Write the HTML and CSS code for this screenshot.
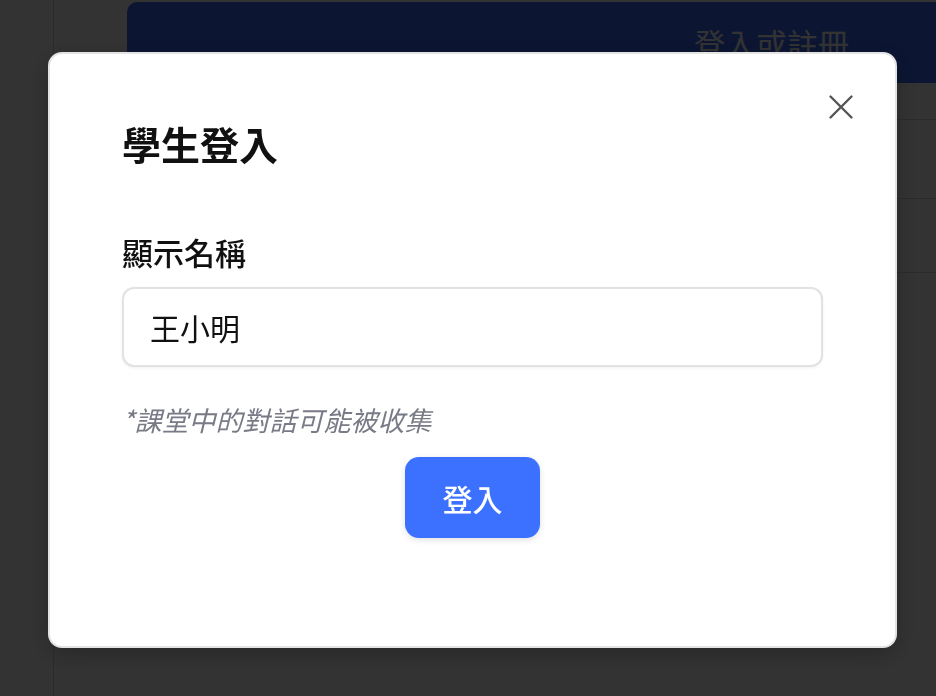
FILE: index.html
```html
<!DOCTYPE html>
<html lang="zh-Hant">
<head>
  <meta charset="UTF-8">
  <meta name="viewport" content="width=device-width, initial-scale=1.0">
  <title>學生登入</title>
  <link rel="stylesheet" href="styles.css">
</head>
<body>

<div class="page">
  <aside class="sidebar"></aside>
  <main class="main">
    <header class="topbar">登入或註冊</header>
    <div class="row row-sm"></div>
    <div class="row row-lg"></div>
    <div class="row row-md"></div>
  </main>
</div>

<!-- Login dialog -->
<div class="overlay">
  <div class="modal">
    <button class="close-btn" aria-label="關閉">
      <svg width="40" height="40" viewBox="0 0 40 40">
        <path d="M9.5 9.5 L30.5 30.5 M30.5 9.5 L9.5 30.5" stroke="#555" stroke-width="2.4" stroke-linecap="round" fill="none"/>
      </svg>
    </button>

    <h2 class="modal-title">學生登入</h2>

    <label class="field-label" for="displayName">顯示名稱</label>
    <input id="displayName" class="field-input" type="text" value="王小明">

    <p class="note">*課堂中的對話可能被收集</p>

    <div class="actions">
      <button class="button">登入</button>
    </div>
  </div>
</div>

</body>
</html>
```

FILE: styles.css
```css
* {
  box-sizing: border-box;
}

body {
  margin: 0;
  font-family: "Noto Sans CJK TC", "Noto Sans", sans-serif;
  background-color: #fff;
  overflow: hidden;
}

/* page behind the dialog */
.page {
  display: flex;
  height: 696px;
}

.sidebar {
  flex-shrink: 0;
  width: 54px;
  border-right: 1px solid #d6d6d6;
}

.main {
  flex: 1;
  min-width: 0;
  padding: 2px 0 0 73px;
}

.topbar {
  width: 850px;
  height: 81px;
  display: flex;
  align-items: center;
  justify-content: flex-end;
  padding-right: 128px;
  background-color: #3c6eff;
  color: #fff;
  font-size: 31px;
  line-height: 1;
  border-radius: 10px 0 0 0;
}

.row {
  border-bottom: 1px solid #d6d6d6;
}

.row-sm {
  height: 37px;
}

.row-lg {
  height: 79px;
}

.row-md {
  height: 74px;
}

/* dialog */
.overlay {
  position: fixed;
  inset: 0;
  background-color: rgba(0, 0, 0, 0.8);
  display: flex;
  align-items: center;
  justify-content: center;
}

.modal {
  position: relative;
  width: 849px;
  height: 596px;
  margin: 4px 0 0 9px;
  padding: 70px 72px;
  background-color: #fff;
  border: 2px solid #e3e3e3;
  border-radius: 14px;
  box-shadow: 0 6px 24px rgba(0, 0, 0, 0.25);
}

.close-btn {
  position: absolute;
  top: 33px;
  right: 34px;
  width: 40px;
  height: 40px;
  padding: 0;
  border: none;
  background: none;
  cursor: pointer;
}

.close-btn svg {
  display: block;
}

.modal-title {
  margin: 0;
  font-size: 39px;
  line-height: 1;
  font-weight: 700;
  color: #111;
}

.field-label {
  display: block;
  margin-top: 73px;
  font-size: 31px;
  line-height: 1;
  font-weight: 500;
  color: #111;
}

.field-input {
  display: block;
  width: 100%;
  height: 80px;
  margin-top: 20px;
  padding: 0 26px;
  font-family: inherit;
  font-size: 30px;
  color: #111;
  border: 2px solid #e2e2e2;
  border-radius: 12px;
  box-shadow: 0 1px 3px rgba(0, 0, 0, 0.06);
  outline: none;
}

.note {
  margin: 39px 0 0;
  font-size: 27px;
  line-height: 1;
  font-style: italic;
  color: #787a86;
}

.actions {
  display: flex;
  justify-content: center;
  margin-top: 24px;
}

.button {
  width: 135px;
  height: 81px;
  font-family: inherit;
  font-size: 30px;
  font-weight: 500;
  color: white;
  background-color: #3b71fe;
  border: none;
  border-radius: 14px;
  box-shadow: 0 2px 6px rgba(0, 0, 0, 0.12);
  cursor: pointer;
}

.button:hover {
  background-color: #2f63ea;
}
```
